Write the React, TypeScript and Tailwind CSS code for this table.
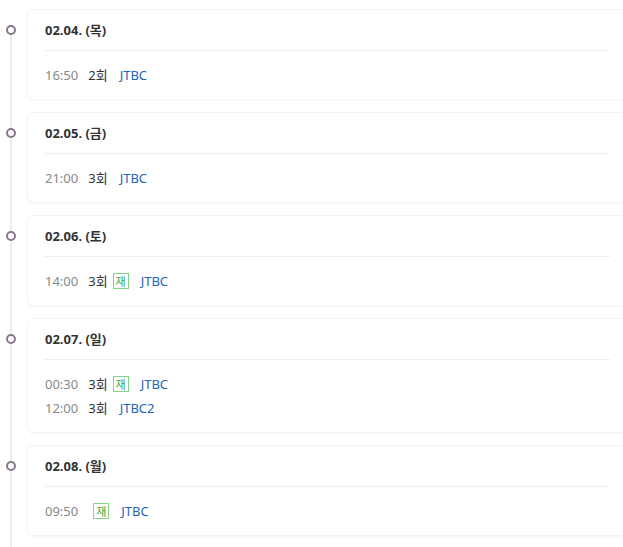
import React from 'react';

type Item = {
  time: string;
  ep?: string;
  re?: boolean;
  ch: string;
};

type Day = {
  date: string;
  items: Item[];
};

const days: Day[] = [
  { date: '02.04. (목)', items: [{ time: '16:50', ep: '2회', ch: 'JTBC' }] },
  { date: '02.05. (금)', items: [{ time: '21:00', ep: '3회', ch: 'JTBC' }] },
  { date: '02.06. (토)', items: [{ time: '14:00', ep: '3회', re: true, ch: 'JTBC' }] },
  {
    date: '02.07. (일)',
    items: [
      { time: '00:30', ep: '3회', re: true, ch: 'JTBC' },
      { time: '12:00', ep: '3회', ch: 'JTBC2' },
    ],
  },
  { date: '02.08. (월)', items: [{ time: '09:50', re: true, ch: 'JTBC' }] },
];

function ScheduleRow({ item }: { item: Item }) {
  return (
    <div className="flex items-center h-[18px] text-[13px] leading-[18px]">
      <span className="text-[#888]">{item.time}</span>
      <span className="ml-[10px] text-[#333]">{item.ep}</span>
      {item.re && (
        <span className="ml-[5px] flex items-center justify-center w-[16px] h-[16px] border border-[#86d486] text-[#3aa63a] text-[11px] leading-none">
          재
        </span>
      )}
      <span className="ml-3 text-[#2563b8]">{item.ch}</span>
    </div>
  );
}

export default function App() {
  return (
    <div
      className="relative w-[623px] h-[547px] overflow-hidden bg-white pt-[9px]"
      style={{ fontFamily: '"Noto Sans", "Noto Sans CJK KR", sans-serif' }}
    >
      {/* 타임라인 선 */}
      <div className="absolute left-[10px] top-[30px] bottom-0 w-[2px] bg-[#ececec]" />

      <div className="flex flex-col gap-3">
        {days.map((day) => (
          <div key={day.date} className="flex">
            <div className="relative w-[27px] shrink-0">
              <div className="absolute left-[6px] top-[16px] w-[10px] h-[10px] rounded-full border-2 border-[#87778a] bg-white" />
            </div>
            <div className="w-[601px] shrink-0 rounded-md border border-[#f4f4f4] bg-white shadow-[0_1px_2px_rgba(0,0,0,0.03)] px-[17px] pt-[11px] pb-[15px]">
              <div className="h-[18px] leading-[18px] text-[13px] font-bold text-[#333]">{day.date}</div>
              <div className="mt-[11px] h-px bg-[#eeeeee]" />
              <div className="pt-[15px] flex flex-col gap-[6px]">
                {day.items.map((item, i) => (
                  <ScheduleRow key={i} item={item} />
                ))}
              </div>
            </div>
          </div>
        ))}
      </div>
    </div>
  );
}
